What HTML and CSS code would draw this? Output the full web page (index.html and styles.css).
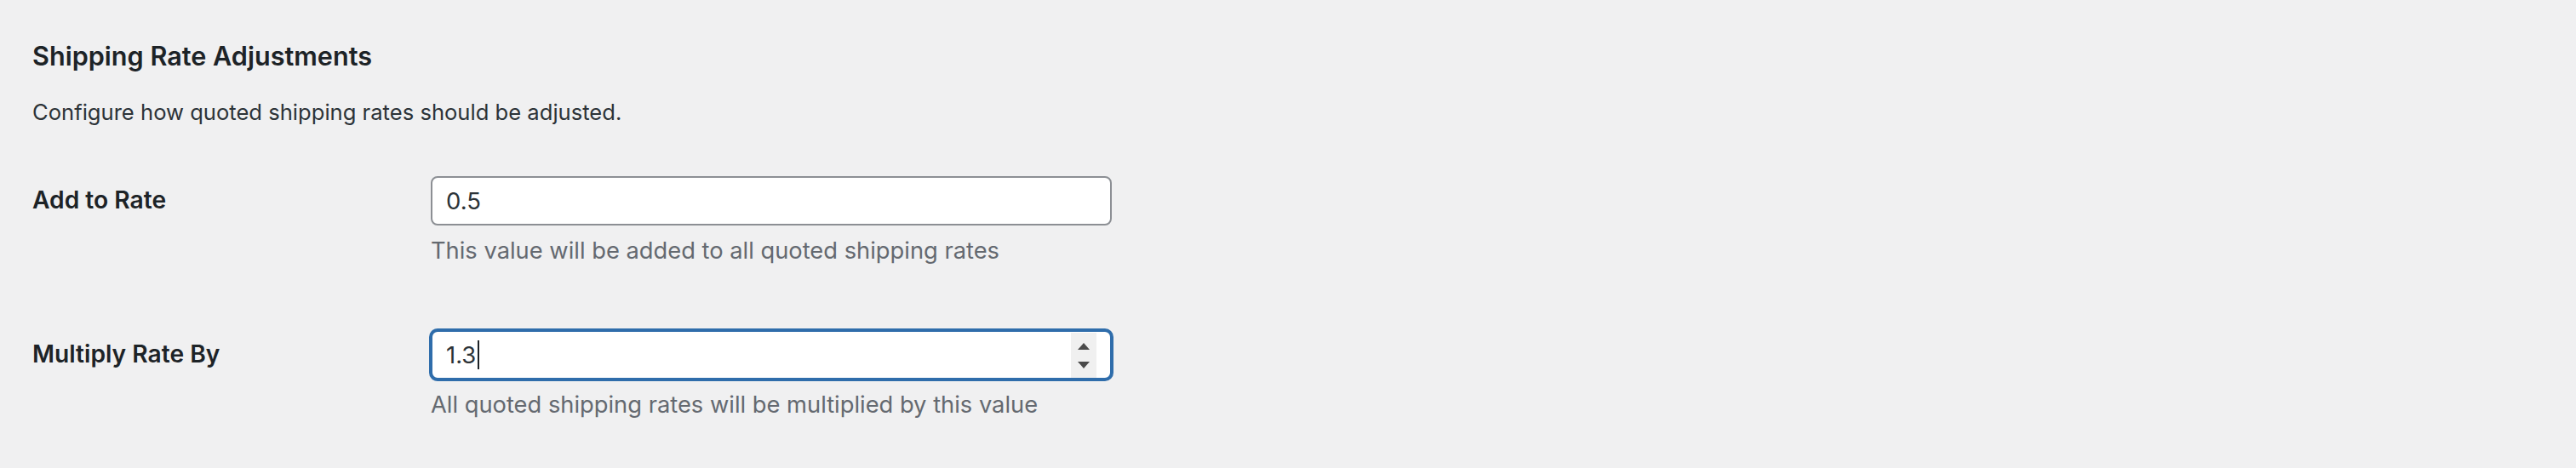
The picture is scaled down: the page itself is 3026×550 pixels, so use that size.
FILE: index.html
```html
<!DOCTYPE html>
<html lang="en">
<head>
<meta charset="utf-8">
<title>Shipping Rate Adjustments</title>
<link rel="stylesheet" href="styles.css">
</head>
<body>
<main class="wrap">
  <h2 class="section-title">Shipping Rate Adjustments</h2>
  <p class="section-desc">Configure how quoted shipping rates should be adjusted.</p>
  <div class="form-table">
    <div class="form-row">
      <label class="form-label" for="add_rate">Add to Rate</label>
      <div class="form-field">
        <div class="input-wrap">
          <input class="text-input" id="add_rate" type="text" value="0.5">
        </div>
        <p class="description">This value will be added to all quoted shipping rates</p>
      </div>
    </div>
    <div class="form-row">
      <label class="form-label" for="multiply_rate">Multiply Rate By</label>
      <div class="form-field">
        <div class="input-wrap">
          <input class="text-input is-focused" id="multiply_rate" type="number" step="0.1" value="1.3">
          <span class="caret"></span>
          <span class="spinner">
            <span class="spin-up"></span>
            <span class="spin-down"></span>
          </span>
        </div>
        <p class="description">All quoted shipping rates will be multiplied by this value</p>
      </div>
    </div>
  </div>
</main>
</body>
</html>
```

FILE: styles.css
```css
html, body {
  margin: 0;
  padding: 0;
  background: #f0f0f1;
}

body {
  font-family: Inter, "Noto Sans", "Liberation Sans", sans-serif;
  color: #3c434a;
}

.wrap {
  padding: 44px 38px 0 38px;
}

.section-title {
  margin: 0;
  font-size: 30.6px;
  font-weight: 600;
  line-height: 44px;
  color: #1d2327;
}

.section-desc {
  margin: 26px 0 0 0;
  font-size: 25.6px;
  line-height: 36px;
  color: #2c3338;
}

.form-table {
  margin-top: 57px;
  display: flex;
  flex-direction: column;
  gap: 72px;
}

.form-row {
  display: grid;
  grid-template-columns: 468px 800px;
  align-items: start;
}

.form-label {
  font-size: 28.2px;
  font-weight: 600;
  line-height: 36px;
  color: #1d2327;
  padding-top: 10px;
}

.form-field {
  display: flex;
  flex-direction: column;
}

.input-wrap {
  position: relative;
  width: 800px;
  height: 58px;
}

.text-input {
  box-sizing: border-box;
  width: 800px;
  height: 58px;
  margin: 0;
  padding: 0 16px;
  border: 2px solid #8c8f94;
  border-radius: 8px;
  background: #fff;
  font-family: Inter, "Noto Sans", "Liberation Sans", sans-serif;
  font-size: 27.5px;
  color: #2c3338;
  outline: none;
  -moz-appearance: textfield;
}

.text-input::-webkit-inner-spin-button,
.text-input::-webkit-outer-spin-button {
  -webkit-appearance: none;
  margin: 0;
}

.text-input.is-focused {
  border-color: #2f6dab;
  box-shadow: 0 0 0 2px #2f6dab;
}

.caret {
  position: absolute;
  left: 55px;
  top: 12px;
  width: 2px;
  height: 34px;
  background: #1d2327;
}

.spinner {
  position: absolute;
  right: 18px;
  top: 3px;
  width: 30px;
  height: 53px;
  background: #f0f0f0;
  display: flex;
  flex-direction: column;
  align-items: center;
  justify-content: space-between;
  padding: 12px 0 11px;
  box-sizing: border-box;
}

.spin-up {
  width: 0;
  height: 0;
  border-left: 7px solid transparent;
  border-right: 7px solid transparent;
  border-bottom: 8px solid #4a4a4a;
}

.spin-down {
  width: 0;
  height: 0;
  border-left: 7px solid transparent;
  border-right: 7px solid transparent;
  border-top: 8px solid #4a4a4a;
}

.description {
  margin: 9px 0 0 0;
  font-size: 27.3px;
  line-height: 42px;
  color: #646970;
}
```
